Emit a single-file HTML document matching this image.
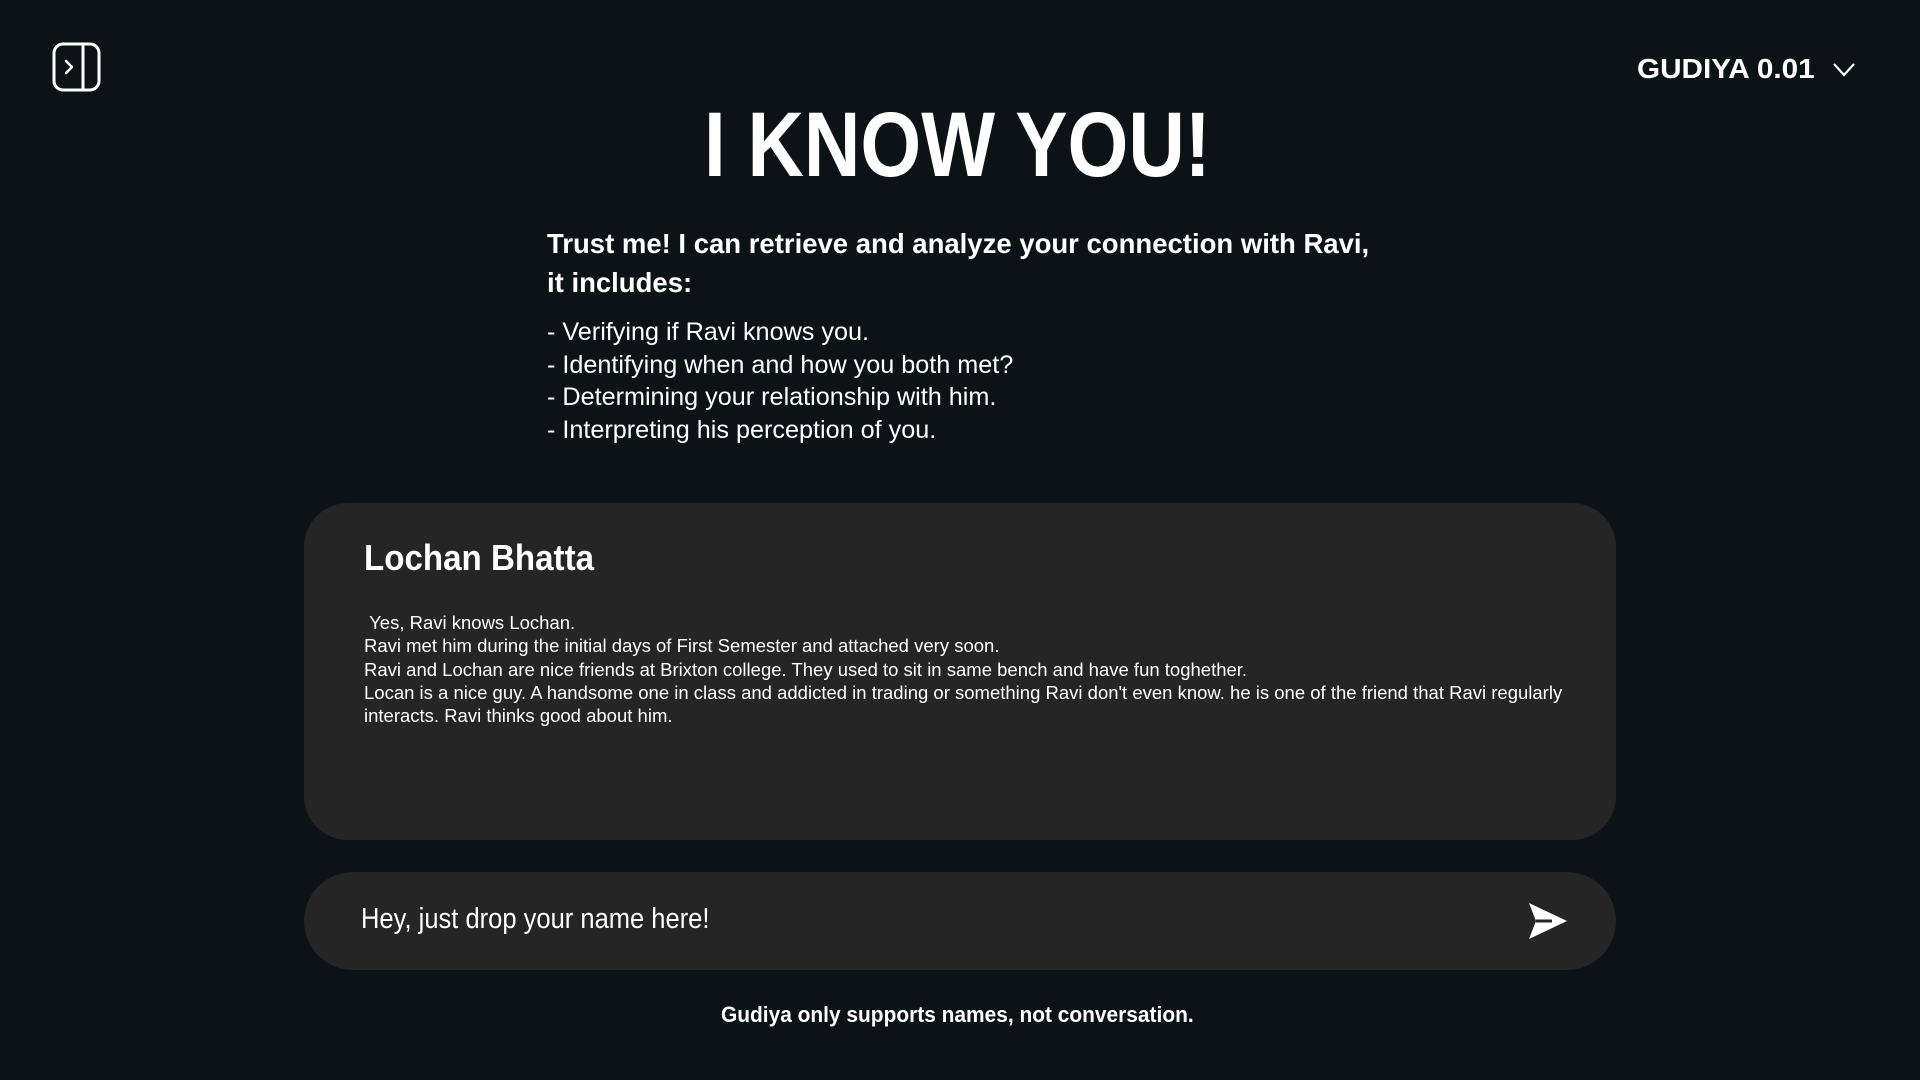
<!DOCTYPE html>
<html><head><meta charset="utf-8"><style>
html,body{margin:0;padding:0}
body{width:1920px;height:1080px;background:#0c1317;color:#fff;font-family:"Liberation Sans",sans-serif;position:relative;overflow:hidden}
.a{position:absolute;white-space:nowrap;transform-origin:left top}
.card{position:absolute;left:304px;width:1312px;background:#252525}
</style></head><body>
<svg class="a" style="left:52px;top:42px" width="50" height="50" viewBox="0 0 50 50"><rect x="2" y="2" width="45" height="46" rx="9" fill="none" stroke="#fff" stroke-width="3"/><line x1="31" y1="3" x2="31" y2="47" stroke="#fff" stroke-width="3"/><path d="M14 19 L20 25 L14 31" fill="none" stroke="#fff" stroke-width="2.5" stroke-linecap="round" stroke-linejoin="round"/></svg>
<div class="a" style="left:1637px;top:53px;font-size:28px;font-weight:bold;transform:scaleX(1.06)">GUDIYA 0.01</div>
<svg class="a" style="left:1832px;top:62px" width="24" height="16" viewBox="0 0 24 16"><path d="M2 2 L12 13 L22 2" fill="none" stroke="#fff" stroke-width="2.2"/></svg>
<div class="a" style="left:704px;top:99px;font-size:92px;font-weight:bold;transform:scaleX(.85);line-height:1">I KNOW YOU!</div>
<div class="a" style="left:547px;top:224px;font-size:27.5px;font-weight:bold;line-height:39px;transform:scaleX(1.0)">Trust me! I can retrieve and analyze your connection with Ravi,<br>it includes:</div>
<div class="a" style="left:547px;top:316px;font-size:25.2px;line-height:32.7px">- Verifying if Ravi knows you.<br>- Identifying when and how you both met?<br>- Determining your relationship with him.<br>- Interpreting his perception of you.</div>
<div class="card" style="top:503px;height:337px;border-radius:44px"></div>
<div class="a" style="left:364px;top:537px;font-size:36px;font-weight:bold;transform:scaleX(.92)">Lochan Bhatta</div>
<div class="a" style="left:364px;top:611px;font-size:18.5px;line-height:23.3px">&nbsp;Yes, Ravi knows Lochan.<br>Ravi met him during the initial days of First Semester and attached very soon.<br>Ravi and Lochan are nice friends at Brixton college. They used to sit in same bench and have fun toghether.<br>Locan is a nice guy. A handsome one in class and addicted in trading or something Ravi don't even know. he is one of the friend that Ravi regularly<br>interacts. Ravi thinks good about him.</div>
<div class="card" style="top:872px;height:98px;border-radius:49px"></div>
<div class="a" style="left:361px;top:903px;font-size:29px;transform:scaleX(.88)">Hey, just drop your name here!</div>
<svg class="a" style="left:1526px;top:900px" width="44" height="42" viewBox="0 0 44 42"><path d="M3 3 L41 21 L3 39 L10 21 Z" fill="#fff"/><path d="M10 21 L26 21" stroke="#252525" stroke-width="3"/></svg>
<div class="a" style="left:721px;top:1002px;font-size:22px;font-weight:bold;transform:scaleX(.95)">Gudiya only supports names, not conversation.</div>
</body></html>
